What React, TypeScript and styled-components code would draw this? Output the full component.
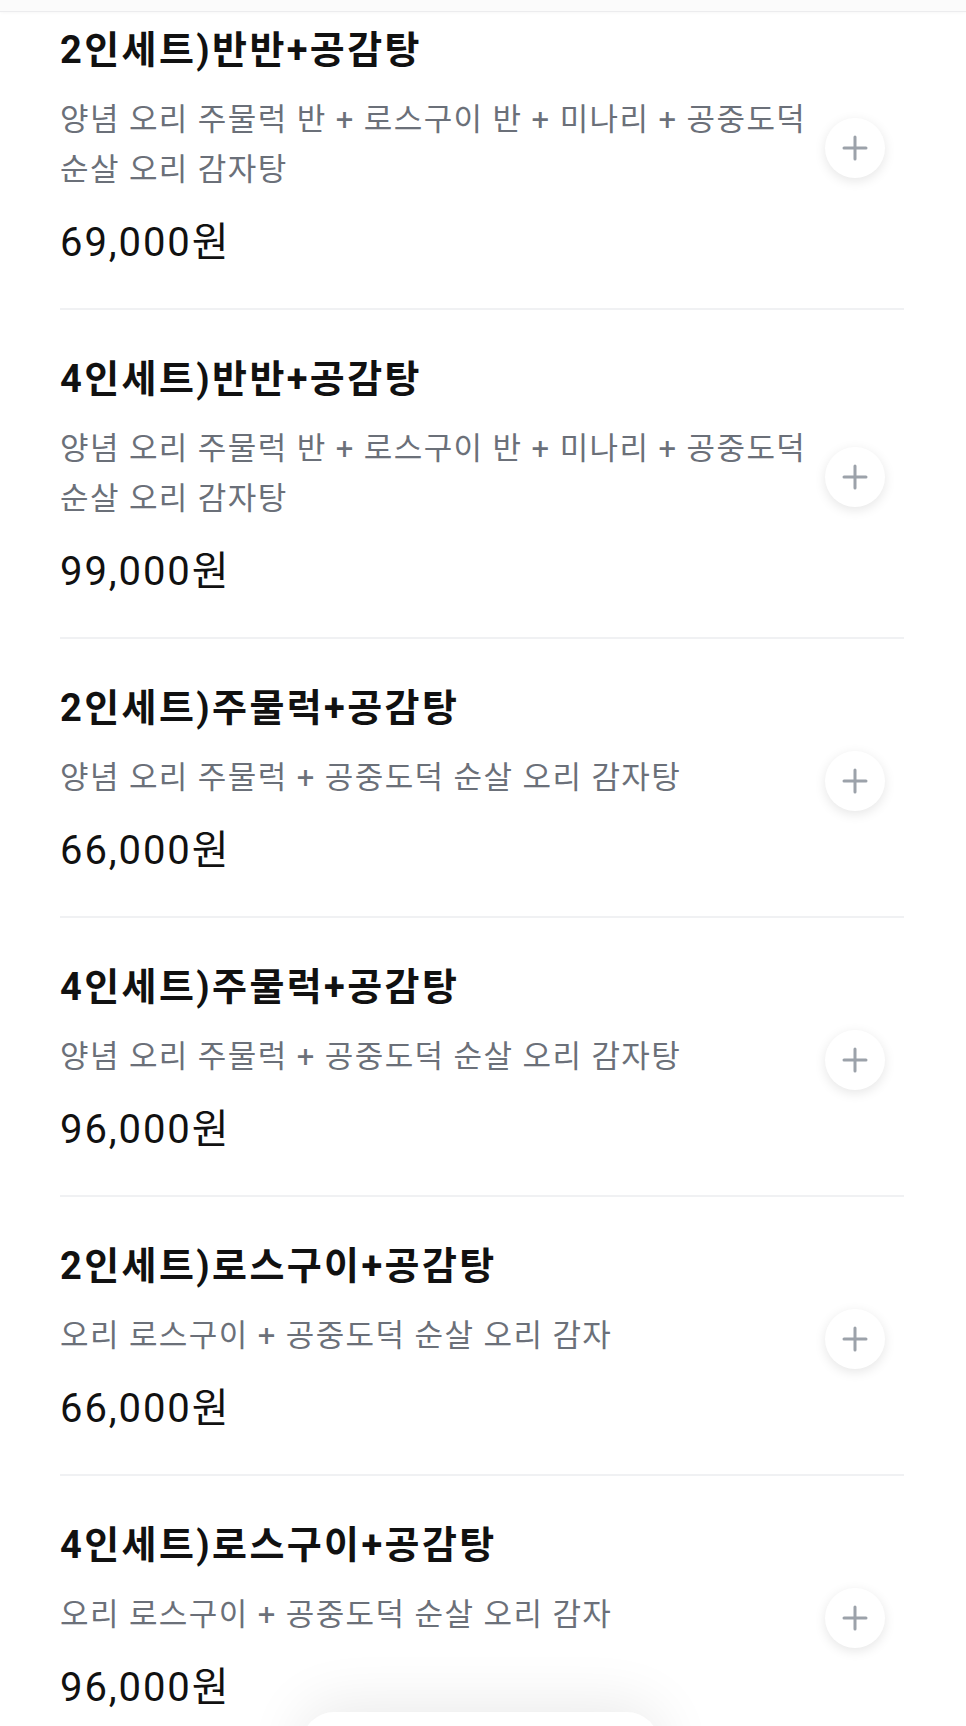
import styled, { createGlobalStyle } from 'styled-components';

interface MenuItem {
  name: string; // 메뉴 이름
  desc: string; // 구성 설명
  price: number; // 가격(원)
}

const menus: MenuItem[] = [
  {
    name: '2인세트)반반+공감탕',
    desc: '양념 오리 주물럭 반 + 로스구이 반 + 미나리 + 공중도덕 순살 오리 감자탕',
    price: 69000,
  },
  {
    name: '4인세트)반반+공감탕',
    desc: '양념 오리 주물럭 반 + 로스구이 반 + 미나리 + 공중도덕 순살 오리 감자탕',
    price: 99000,
  },
  { name: '2인세트)주물럭+공감탕', desc: '양념 오리 주물럭 + 공중도덕 순살 오리 감자탕', price: 66000 },
  { name: '4인세트)주물럭+공감탕', desc: '양념 오리 주물럭 + 공중도덕 순살 오리 감자탕', price: 96000 },
  { name: '2인세트)로스구이+공감탕', desc: '오리 로스구이 + 공중도덕 순살 오리 감자', price: 66000 },
  { name: '4인세트)로스구이+공감탕', desc: '오리 로스구이 + 공중도덕 순살 오리 감자', price: 96000 },
];

const GlobalStyle = createGlobalStyle`
  html, body {
    margin: 0;
    padding: 0;
    background: #ffffff;
    overflow: hidden;
  }
  body {
    font-family: Roboto, "Noto Sans CJK KR", sans-serif;
    color: #111111;
  }
`;

const Page = styled.div`
  position: relative;
  width: 966px;
  height: 1726px;
  overflow: hidden;
  background: #ffffff;
`;

// 상단 고정 헤더의 아래 가장자리
const TopBar = styled.div`
  position: absolute;
  top: 0;
  left: 0;
  right: 0;
  height: 11px;
  background: #fbfbfb;
  border-bottom: 1px solid #ececee;
  box-shadow: 0 1px 3px rgba(0, 0, 0, 0.03);
  z-index: 2;
`;

const List = styled.ul`
  list-style: none;
  margin: -19px 0 0 0;
  padding: 0;
`;

const Row = styled.li`
  display: flex;
  align-items: center;
  gap: 15px;
  margin: 0 62px 0 60px;
  padding: 45px 19px 41px 0;
  border-bottom: 2px solid #f0f1f3;
`;

const TextBox = styled.div`
  flex: 1;
  min-width: 0;
  display: flex;
  flex-direction: column;
`;

const Name = styled.div`
  font-size: 38px;
  font-weight: 700;
  line-height: 48px;
  color: #111111;
  letter-spacing: 2.4px;
`;

const Desc = styled.div`
  margin-top: 21px;
  font-size: 31px;
  line-height: 50px;
  color: #6b7079;
  letter-spacing: 1.4px;
`;

const Price = styled.div`
  margin-top: 24px;
  font-size: 40px;
  line-height: 48px;
  color: #111111;
  letter-spacing: 1.9px;
`;

const AddButton = styled.button`
  flex: none;
  width: 60px;
  height: 60px;
  margin-top: 2px;
  border: none;
  border-radius: 50%;
  background: #ffffff;
  box-shadow: 0 3px 12px rgba(0, 0, 0, 0.1);
  display: flex;
  align-items: center;
  justify-content: center;
  padding: 0;
`;

// 하단 장바구니 플로팅 버튼(화면 밖으로 잘림)
const FloatingCart = styled.div`
  position: absolute;
  left: 302px;
  top: 1712px;
  width: 357px;
  height: 90px;
  border-radius: 32px;
  background: #ffffff;
  box-shadow: 0 -6px 60px rgba(0, 0, 0, 0.09);
  z-index: 2;
`;

const PlusIcon = () => (
  <svg width="26" height="26" viewBox="0 0 26 26">
    <path d="M13 2v22M2 13h22" stroke="#9ca2aa" strokeWidth="3" strokeLinecap="round" />
  </svg>
);

export default function App() {
  return (
    <Page>
      <GlobalStyle />
      <TopBar />
      <List>
        {menus.map((menu, index) => (
          <Row key={index}>
            <TextBox>
              <Name>{menu.name}</Name>
              <Desc>{menu.desc}</Desc>
              <Price>{menu.price.toLocaleString('ko-KR')}원</Price>
            </TextBox>
            <AddButton aria-label="담기">
              <PlusIcon />
            </AddButton>
          </Row>
        ))}
      </List>
      <FloatingCart />
    </Page>
  );
}
